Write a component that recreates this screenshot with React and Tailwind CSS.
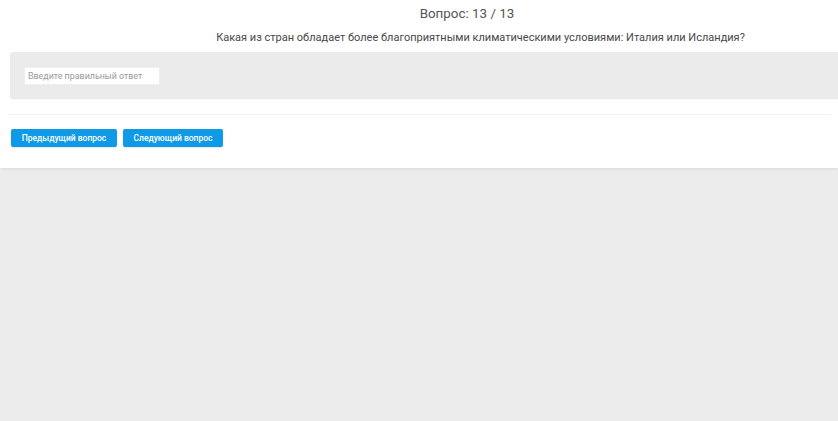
export default function App() {
  return (
    <div
      className="min-h-screen w-full overflow-hidden bg-[#ececec]"
      style={{ fontFamily: "Roboto, 'Liberation Sans', sans-serif" }}
    >
      <div className="h-[168px] bg-white shadow-[0_1px_3px_rgba(0,0,0,0.08)]">
        <div className="w-[961px]">
          <h1 className="w-[934px] pt-[6px] text-center text-[13.4px] leading-[16px] text-[#555]">
            Вопрос: 13 / 13
          </h1>
          <p className="mt-[9px] text-center text-[11px] leading-[13px] text-[#484848]">
            Какая из стран обладает более благоприятными климатическими условиями: Италия или Исландия?
          </p>
          <div className="ml-[10px] mt-[8px] flex h-[47px] items-center rounded-[3px] bg-[#ebebeb] pl-[14px] shadow-[0_1px_1px_rgba(0,0,0,0.03)]">
            <input
              type="text"
              placeholder="Введите правильный ответ"
              className="h-[18px] w-[136px] border border-[#eee] bg-white px-[3px] text-[8.9px] text-[#555] outline-none placeholder:text-[#9a9a9a]"
            />
          </div>
        </div>
        <div className="mx-[8px] mt-[15px] h-px bg-[#f2f2f2]" />
        <div className="flex gap-[6px] pl-[11px] pt-[14px]">
          <button className="h-[18px] w-[106px] rounded-[2px] bg-[#0e9ae6] text-center text-[8.5px] font-medium text-white shadow-[0_1px_1px_rgba(0,0,0,0.1)]">
            Предыдущий вопрос
          </button>
          <button className="h-[18px] w-[100px] rounded-[2px] bg-[#0e9ae6] text-center text-[8.5px] font-medium text-white shadow-[0_1px_1px_rgba(0,0,0,0.1)]">
            Следующий вопрос
          </button>
        </div>
      </div>
    </div>
  );
}
